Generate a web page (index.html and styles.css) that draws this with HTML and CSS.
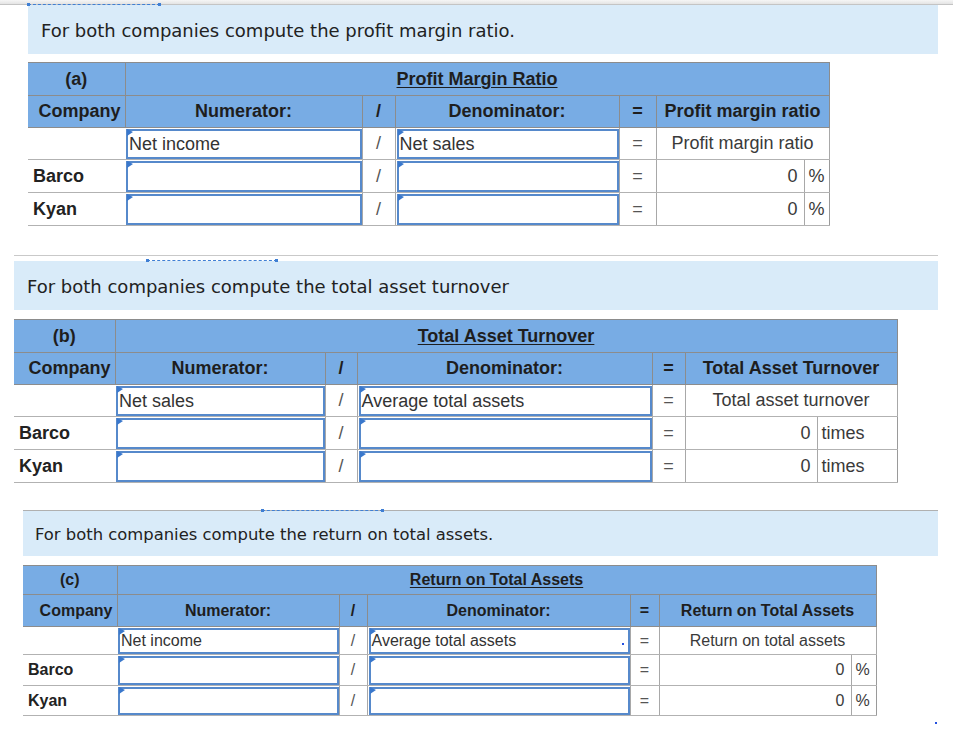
FILE: index.html
```html
<!DOCTYPE html>
<html>
<head>
<meta charset="utf-8">
<link rel="stylesheet" href="styles.css">
</head>
<body>
<div class="topbar"></div>

<section class="sec s1">
  <div class="prompt"><span class="dots d1"></span>For both companies compute the profit margin ratio.</div>
  <table class="grid g1">
    <colgroup><col class="c1"><col class="c2"><col class="c3"><col class="c4"><col class="c5"><col class="c6"><col class="c7"></colgroup>
    <tr class="h1"><th class="co">(a)</th><th colspan="6" class="title"><u>Profit Margin Ratio</u></th></tr>
    <tr class="h2"><th class="co">Company</th><th>Numerator:</th><th>/</th><th>Denominator:</th><th>=</th><th colspan="2">Profit margin ratio</th></tr>
    <tr class="lbl"><td class="co"></td><td class="in"><div class="box">Net income</div></td><td class="op">/</td><td class="in"><div class="box">Net sales</div></td><td class="op">=</td><td colspan="2" class="res">Profit margin ratio</td></tr>
    <tr class="row"><td class="co name">Barco</td><td class="in"><div class="box"></div></td><td class="op">/</td><td class="in"><div class="box"></div></td><td class="op">=</td><td class="val">0</td><td class="unit">%</td></tr>
    <tr class="row"><td class="co name">Kyan</td><td class="in"><div class="box"></div></td><td class="op">/</td><td class="in"><div class="box"></div></td><td class="op">=</td><td class="val">0</td><td class="unit">%</td></tr>
  </table>
</section>

<section class="sec s2">
  <div class="rule"></div>
  <div class="prompt"><span class="dots d2"></span>For both companies compute the total asset turnover</div>
  <table class="grid g2">
    <colgroup><col class="c1"><col class="c2"><col class="c3"><col class="c4"><col class="c5"><col class="c6"><col class="c7"></colgroup>
    <tr class="h1"><th class="co">(b)</th><th colspan="6" class="title"><u>Total Asset Turnover</u></th></tr>
    <tr class="h2"><th class="co">Company</th><th>Numerator:</th><th>/</th><th>Denominator:</th><th>=</th><th colspan="2">Total Asset Turnover</th></tr>
    <tr class="lbl"><td class="co"></td><td class="in"><div class="box">Net sales</div></td><td class="op">/</td><td class="in"><div class="box">Average total assets</div></td><td class="op">=</td><td colspan="2" class="res">Total asset turnover</td></tr>
    <tr class="row"><td class="co name">Barco</td><td class="in"><div class="box"></div></td><td class="op">/</td><td class="in"><div class="box"></div></td><td class="op">=</td><td class="val">0</td><td class="unit">times</td></tr>
    <tr class="row"><td class="co name">Kyan</td><td class="in"><div class="box"></div></td><td class="op">/</td><td class="in"><div class="box"></div></td><td class="op">=</td><td class="val">0</td><td class="unit">times</td></tr>
  </table>
</section>

<section class="sec s3">
  <div class="rule"></div>
  <div class="prompt"><span class="dots d3"></span>For both companies compute the return on total assets.</div>
  <table class="grid g3">
    <colgroup><col class="c1"><col class="c2"><col class="c3"><col class="c4"><col class="c5"><col class="c6"><col class="c7"></colgroup>
    <tr class="h1"><th class="co">(c)</th><th colspan="6" class="title"><u>Return on Total Assets</u></th></tr>
    <tr class="h2"><th class="co">Company</th><th>Numerator:</th><th>/</th><th>Denominator:</th><th>=</th><th colspan="2">Return on Total Assets</th></tr>
    <tr class="lbl"><td class="co"></td><td class="in"><div class="box">Net income</div></td><td class="op">/</td><td class="in"><div class="box">Average total assets<span class="pt"></span></div></td><td class="op">=</td><td colspan="2" class="res">Return on total assets</td></tr>
    <tr class="row r-b"><td class="co name">Barco</td><td class="in"><div class="box"></div></td><td class="op">/</td><td class="in"><div class="box"></div></td><td class="op">=</td><td class="val">0</td><td class="unit">%</td></tr>
    <tr class="row r-k"><td class="co name">Kyan</td><td class="in"><div class="box"></div></td><td class="op">/</td><td class="in"><div class="box"></div></td><td class="op">=</td><td class="val">0</td><td class="unit">%</td></tr>
  </table>
</section>

<span class="corner-dot"></span>
</body>
</html>
```

FILE: styles.css
```css
* { box-sizing: border-box; }

body {
  margin: 0;
  width: 953px;
  height: 738px;
  overflow: hidden;
  position: relative;
  background: #fff;
  font-family: "Liberation Sans", Arial, sans-serif;
  color: #222;
}

.topbar {
  height: 5px;
  background: linear-gradient(#f6f6f6, #e4e4e4);
  border-bottom: 1px solid #c4c4c4;
}

.prompt {
  position: relative;
  display: flex;
  align-items: center;
  background: #d9ebf9;
  font-family: "DejaVu Sans", Verdana, sans-serif;
  color: #222;
  white-space: nowrap;
  padding-top: 2px;
}

.dots {
  position: absolute;
  top: -1px;
  height: 1px;
  border-top: 1px dashed #3f7fd4;
}
.dots::before, .dots::after {
  content: "";
  position: absolute;
  top: -2px;
  width: 3px;
  height: 3px;
  background: #3f7fd4;
}
.dots::before { left: -1px; }
.dots::after { right: -1px; }

.rule { height: 1px; background: #c9c9c9; }

/* section 1 */
.s1 { margin-left: 28px; }
.s1 .prompt { width: 910px; height: 49px; padding-left: 13px; font-size: 18px; }
.d1 { left: 0; width: 132px; }

/* section 2 */
.s2 { margin-left: 14px; margin-top: 29px; }
.s2 .rule { width: 924px; }
.s2 .prompt { width: 924px; height: 49px; margin-top: 5px; padding-left: 13px; font-size: 18px; }
.d2 { left: 133px; width: 130px; }

/* section 3 */
.s3 { margin-left: 23px; margin-top: 27px; }
.s3 .rule { width: 915px; background: #b0b0b0; }
.s3 .prompt { width: 915px; height: 45px; padding-left: 12px; font-size: 16.4px; }
.d3 { left: 239px; width: 121px; }

/* tables */
.grid {
  border-collapse: collapse;
  table-layout: fixed;
  border-top: 1px solid #9a9a9a;
  border-right: 1px solid #9a9a9a;
  margin-top: 8px;
}
.g2, .g3 { margin-top: 9px; }

.grid th {
  background: #78ace4;
  border: 1px solid #8c8c8c;
  padding: 0;
  text-align: center;
  font-weight: bold;
  color: #1e1e1e;
  white-space: nowrap;
}
.grid th.co { border-left: none; }
.grid .h2 th.co { text-align: right; padding-right: 4px; }
.grid th.title u { text-decoration-thickness: 1px; text-underline-offset: 2px; }

.grid td {
  padding: 0;
  border-bottom: 1px solid #b2b2b2;
  color: #3a3a3a;
  white-space: nowrap;
}
.grid td.op {
  text-align: center;
  border-left: 1px solid #a8a8a8;
  border-right: 1px solid #a8a8a8;
  color: #555;
}
.grid td.res { text-align: center; border-right: 1px solid #a8a8a8; }
.grid td.val { text-align: right; padding-right: 6px; border-right: 1px solid #a8a8a8; }
.grid td.unit { text-align: left; padding-left: 4px; color: #3a3a3a; }
.grid td.name { font-weight: bold; color: #222; padding-left: 5px; }
.grid td.in { padding: 1px 0 0 1px; vertical-align: top; }

.box {
  position: relative;
  display: flex;
  align-items: center;
  justify-content: space-between;
  border: 2px solid #5689cb;
  background: #fff;
  padding-left: 1px;
  color: #333;
}
.box::before {
  content: "";
  position: absolute;
  left: -1px;
  top: -2px;
  border-left: 6px solid #3a78cc;
  border-top: 3px solid transparent;
  border-bottom: 4px solid transparent;
}
.pt {
  width: 2px;
  height: 2px;
  background: #2450e0;
  margin-right: 4px;
  margin-top: 6px;
}

/* table 1 & 2 sizing */
.g1, .g2 { font-size: 18px; }
.g1 .h1, .g2 .h1 { height: 33px; }
.g1 .h2, .g2 .h2 { height: 32px; }
.g1 .lbl, .g2 .lbl { height: 32px; }
.g1 .row, .g2 .row { height: 33px; }
.g1 .lbl .box, .g2 .lbl .box { height: 30px; }
.g1 .row .box, .g2 .row .box { height: 31px; }

.g1 { width: 801px; }
.g1 .c1 { width: 97px; }
.g1 .c2 { width: 237px; }
.g1 .c3 { width: 33px; }
.g1 .c4 { width: 224px; }
.g1 .c5 { width: 37px; }
.g1 .c6 { width: 148px; }
.g1 .c7 { width: 25px; }

.g2 { width: 883px; }
.g2 .c1 { width: 101px; }
.g2 .c2 { width: 210px; }
.g2 .c3 { width: 32px; }
.g2 .c4 { width: 295px; }
.g2 .c5 { width: 33px; }
.g2 .c6 { width: 132px; }
.g2 .c7 { width: 80px; }

/* table 3 sizing */
.g3 { font-size: 16px; width: 853px; }
.g3 .h1 { height: 29px; }
.g3 .h2 { height: 32px; }
.g3 .lbl { height: 28px; }
.g3 .r-b { height: 31px; }
.g3 .r-k { height: 30px; }
.g3 .lbl .box { height: 26px; }
.g3 .r-b .box { height: 29px; }
.g3 .r-k .box { height: 28px; }
.g3 .c1 { width: 94px; }
.g3 .c2 { width: 222px; }
.g3 .c3 { width: 28px; }
.g3 .c4 { width: 263px; }
.g3 .c5 { width: 29px; }
.g3 .c6 { width: 192px; }
.g3 .c7 { width: 25px; }

.corner-dot {
  position: absolute;
  left: 935px;
  top: 722px;
  width: 2px;
  height: 2px;
  background: #2450e0;
}
```
